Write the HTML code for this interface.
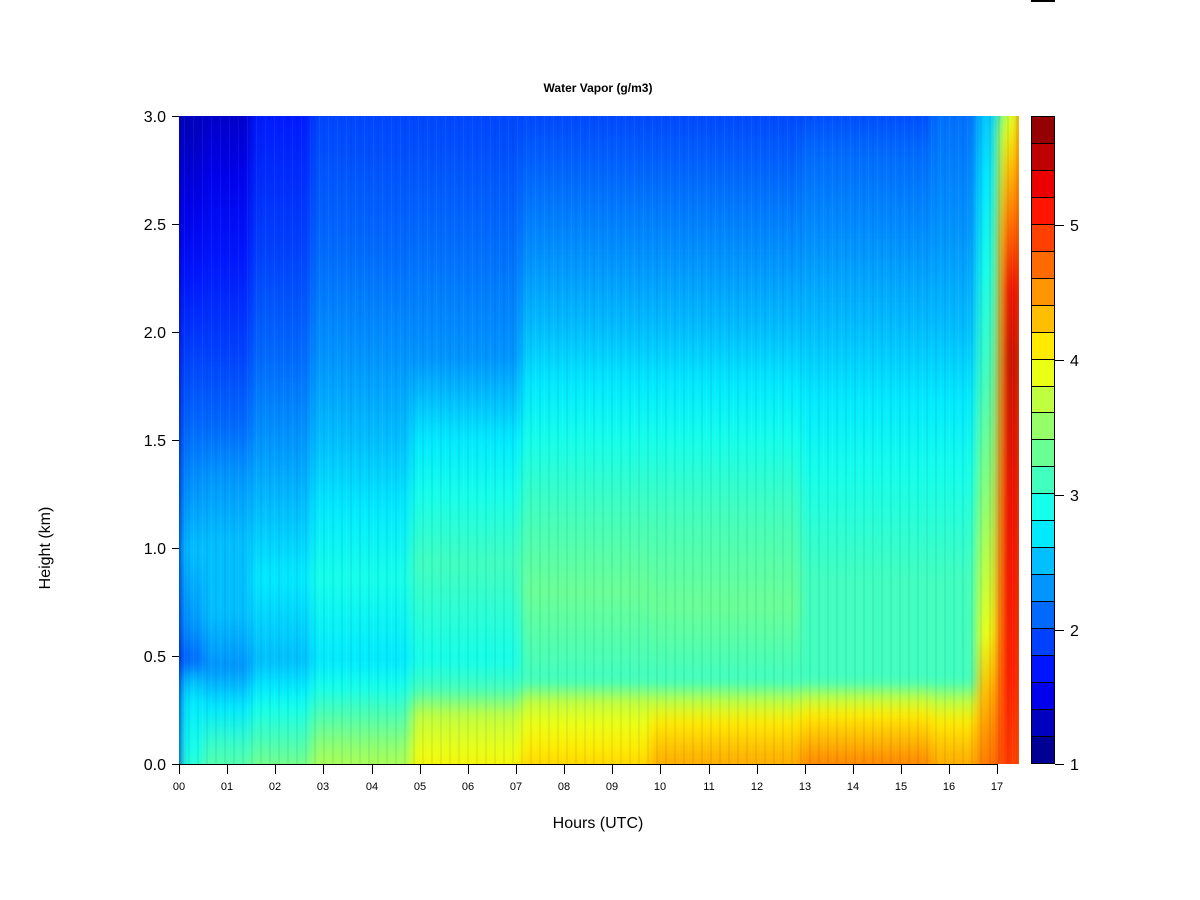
<!DOCTYPE html>
<html><head><meta charset="utf-8"><style>
body{margin:0;width:1200px;height:900px;background:#fff;position:relative;overflow:hidden;font-family:"Liberation Sans",Arial,sans-serif;color:#000}
.abs{position:absolute}
#wrap{left:179px;top:116px;width:840px;height:648px;overflow:hidden}
#plot{left:-20px;top:-20px;width:880px;height:688px;display:flex;filter:blur(5px)}
#plot div{height:100%}
.c0{width:20px;background:#0000BF}
.c1{width:24px;background:linear-gradient(to top,#40FFBF 0%,#15FFEA 5%,#00EAFF 12%,#00BFFF 15%,#006AFF 18%,#0095FF 23%,#00BFFF 34%,#0095FF 43%,#006AFF 52%,#0040FF 63%,#0015FF 74%,#0000EA 84%,#0000BF 95%)}
.c2{width:48px;background:linear-gradient(to top,#6AFF95 0%,#40FFBF 5%,#00EAFF 11%,#00BFFF 14%,#0095FF 17%,#00BFFF 25%,#00BFFF 35%,#0095FF 45%,#006AFF 52%,#0040FF 63%,#0015FF 77%,#0000EA 89%,#0000BF 100%)}
.c3{width:60px;background:linear-gradient(to top,#95FF6A 0%,#40FFBF 7%,#15FFEA 11%,#00EAFF 14%,#00BFFF 18%,#00EAFF 30%,#00BFFF 40%,#0095FF 50%,#006AFF 62%,#0040FF 78%,#0015FF 100%)}
.c4{width:100px;background:linear-gradient(to top,#BFFF40 0%,#95FF6A 5%,#40FFBF 11%,#15FFEA 14%,#00EAFF 18%,#15FFEA 30%,#00EAFF 40%,#00BFFF 50%,#0095FF 62%,#006AFF 78%,#0040FF 100%)}
.c5{width:110px;background:linear-gradient(to top,#FFEA00 0%,#EAFF15 5%,#BFFF40 10%,#40FFBF 14%,#15FFEA 18%,#40FFBF 32%,#15FFEA 42%,#00EAFF 50%,#0095FF 62%,#006AFF 80%,#0040FF 100%)}
.c6{width:130px;background:linear-gradient(to top,#FFBF00 0%,#FFEA00 5%,#EAFF15 9%,#BFFF40 12%,#40FFBF 15%,#6AFF95 28%,#40FFBF 40%,#15FFEA 50%,#00EAFF 58%,#00BFFF 66%,#0095FF 76%,#006AFF 88%,#0040FF 100%)}
.c7{width:150px;background:linear-gradient(to top,#FF9500 0%,#FFBF00 5%,#FFEA00 9%,#BFFF40 12%,#40FFBF 15%,#6AFF95 26%,#40FFBF 40%,#15FFEA 50%,#00EAFF 58%,#00BFFF 66%,#0095FF 76%,#006AFF 88%,#0040FF 100%)}
.c8{width:130px;background:linear-gradient(to top,#FF6A00 0%,#FF9500 4%,#FFBF00 7%,#FFEA00 10%,#BFFF40 12.5%,#40FFBF 15%,#40FFBF 30%,#15FFEA 45%,#00EAFF 56%,#00BFFF 66%,#0095FF 78%,#006AFF 92%,#0040FF 100%)}
.c9{width:46px;background:linear-gradient(to top,#FF9500 0%,#FFBF00 5%,#FFEA00 9%,#BFFF40 12%,#40FFBF 15%,#40FFBF 30%,#15FFEA 45%,#00EAFF 56%,#00BFFF 66%,#0095FF 80%,#006AFF 100%)}
.c10{width:20px;background:linear-gradient(to top,#FF6A00 0%,#FF9500 8%,#FFBF00 14%,#EAFF15 22%,#95FF6A 40%,#40FFBF 60%,#15FFEA 75%,#00EAFF 88%,#00BFFF 100%)}
.c11{width:8px;background:linear-gradient(to top,#FF4000 0%,#FF6A00 30%,#FF9500 60%,#FFBF00 80%,#BFFF40 94%,#40FFBF 100%)}
.c12{width:14px;background:linear-gradient(to top,#FF4000 0%,#FF1500 15%,#EA0000 40%,#BF0000 62%,#EA0000 72%,#FF6A00 82%,#FFBF00 90%,#EAFF15 96%,#BFFF40 100%)}
.c13{width:20px;background:#FF6A00}
#tex{left:179px;top:116px;width:840px;height:648px;background:repeating-linear-gradient(90deg,rgba(0,0,80,.06) 0 2px,transparent 2px 5px,rgba(255,255,255,.06) 5px 6px,transparent 6px 9px)}
#cb{left:1031px;top:116px;width:24px;height:648px;border:1px solid #000;box-sizing:border-box;display:flex;flex-direction:column}
#cb div{flex:1;border-bottom:1px solid #000}
#cb div:last-child{border-bottom:none}
.yl{font-size:16px;width:40px;text-align:right;left:126px}
.yt{left:172px;width:7px;height:1px;background:#000}
.xt{top:764px;width:1px;height:10px;background:#000}
.xl{top:781px;font-size:11px;width:30px;text-align:center}
.cl{left:1070px;font-size:16px}
.ct{left:1055px;width:9px;height:1px;background:#000}
</style></head><body>
<div class="abs" style="left:1031px;top:0;width:24px;height:2px;background:#000"></div>
<div class="abs" style="left:0;width:1196px;top:81px;text-align:center;font-size:12px;font-weight:bold">Water Vapor (g/m3)</div>
<div id="wrap" class="abs"><div id="plot" class="abs"><div class="c0"></div><div class="c1"></div><div class="c2"></div><div class="c3"></div><div class="c4"></div><div class="c5"></div><div class="c6"></div><div class="c7"></div><div class="c8"></div><div class="c9"></div><div class="c10"></div><div class="c11"></div><div class="c12"></div><div class="c13"></div></div></div>
<div id="tex" class="abs"></div>
<div class="abs" style="left:179px;top:764px;width:819px;height:1px;background:#000"></div>
<div class="abs yt" style="top:116px"></div><div class="abs yt" style="top:224px"></div><div class="abs yt" style="top:332px"></div><div class="abs yt" style="top:440px"></div><div class="abs yt" style="top:548px"></div><div class="abs yt" style="top:656px"></div><div class="abs yt" style="top:764px"></div>
<div class="abs yl" style="top:109px">3.0</div><div class="abs yl" style="top:217px">2.5</div><div class="abs yl" style="top:325px">2.0</div><div class="abs yl" style="top:433px">1.5</div><div class="abs yl" style="top:541px">1.0</div><div class="abs yl" style="top:649px">0.5</div><div class="abs yl" style="top:757px">0.0</div>
<div class="abs" style="left:46px;top:548px;transform:translate(-50%,-50%) rotate(-90deg);font-size:16px;white-space:nowrap">Height (km)</div>
<div class="abs" style="left:0;width:1196px;top:815px;text-align:center;font-size:16px">Hours (UTC)</div>
<div class="abs xt" style="left:179px"></div><div class="abs xt" style="left:227px"></div><div class="abs xt" style="left:275px"></div><div class="abs xt" style="left:323px"></div><div class="abs xt" style="left:372px"></div><div class="abs xt" style="left:420px"></div><div class="abs xt" style="left:468px"></div><div class="abs xt" style="left:516px"></div><div class="abs xt" style="left:564px"></div><div class="abs xt" style="left:612px"></div><div class="abs xt" style="left:660px"></div><div class="abs xt" style="left:709px"></div><div class="abs xt" style="left:757px"></div><div class="abs xt" style="left:805px"></div><div class="abs xt" style="left:853px"></div><div class="abs xt" style="left:901px"></div><div class="abs xt" style="left:949px"></div><div class="abs xt" style="left:997px"></div>
<div class="abs xl" style="left:164px">00</div><div class="abs xl" style="left:212px">01</div><div class="abs xl" style="left:260px">02</div><div class="abs xl" style="left:308px">03</div><div class="abs xl" style="left:357px">04</div><div class="abs xl" style="left:405px">05</div><div class="abs xl" style="left:453px">06</div><div class="abs xl" style="left:501px">07</div><div class="abs xl" style="left:549px">08</div><div class="abs xl" style="left:597px">09</div><div class="abs xl" style="left:645px">10</div><div class="abs xl" style="left:694px">11</div><div class="abs xl" style="left:742px">12</div><div class="abs xl" style="left:790px">13</div><div class="abs xl" style="left:838px">14</div><div class="abs xl" style="left:886px">15</div><div class="abs xl" style="left:934px">16</div><div class="abs xl" style="left:982px">17</div>
<div id="cb" class="abs">
<div style="background:#950000"></div><div style="background:#BF0000"></div><div style="background:#EA0000"></div><div style="background:#FF1500"></div><div style="background:#FF4000"></div><div style="background:#FF6A00"></div><div style="background:#FF9500"></div><div style="background:#FFBF00"></div><div style="background:#FFEA00"></div><div style="background:#EAFF15"></div><div style="background:#BFFF40"></div><div style="background:#95FF6A"></div><div style="background:#6AFF95"></div><div style="background:#40FFBF"></div><div style="background:#15FFEA"></div><div style="background:#00EAFF"></div><div style="background:#00BFFF"></div><div style="background:#0095FF"></div><div style="background:#006AFF"></div><div style="background:#0040FF"></div><div style="background:#0015FF"></div><div style="background:#0000EA"></div><div style="background:#0000BF"></div><div style="background:#000095"></div>
</div>
<div class="abs ct" style="top:225px"></div><div class="abs ct" style="top:360px"></div><div class="abs ct" style="top:495px"></div><div class="abs ct" style="top:630px"></div><div class="abs ct" style="top:764px"></div>
<div class="abs cl" style="top:218px">5</div><div class="abs cl" style="top:353px">4</div><div class="abs cl" style="top:488px">3</div><div class="abs cl" style="top:623px">2</div><div class="abs cl" style="top:757px">1</div>
</body></html>
